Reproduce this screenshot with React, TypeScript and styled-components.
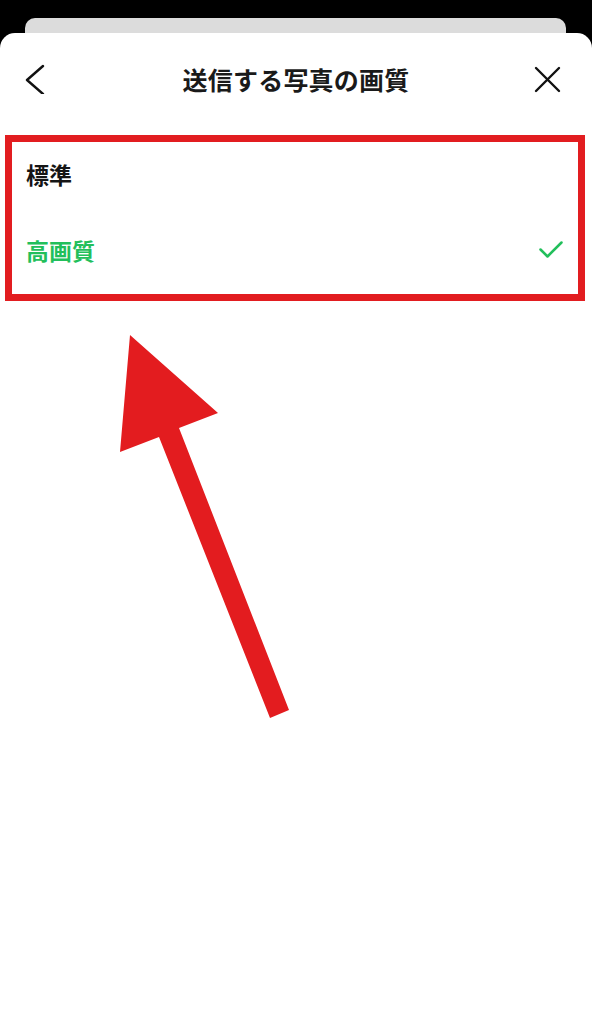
import React from "react";
import styled, { createGlobalStyle } from "styled-components";

const GlobalStyle = createGlobalStyle`
  html, body {
    margin: 0;
    padding: 0;
    background: #000;
  }
  body {
    font-family: "Noto Sans CJK JP", "Noto Sans", sans-serif;
  }
  #root {
    min-height: 100vh;
    display: flex;
    flex-direction: column;
  }
`;

const Screen = styled.div`
  flex: 1;
  display: flex;
  flex-direction: column;
  padding-top: 18px;
  background: #000;
  position: relative;
`;

const BehindCard = styled.div`
  height: 15px;
  margin: 0 26px 0 25px;
  background: #dcdcdc;
  border-radius: 10px 10px 0 0;
`;

const Sheet = styled.div`
  flex: 1;
  background: #fff;
  border-radius: 15px 15px 0 0;
  display: flex;
  flex-direction: column;
`;

const Header = styled.header`
  height: 92px;
  display: grid;
  grid-template-columns: 1fr auto 1fr;
  align-items: center;
  padding: 0 22px;
`;

const IconButton = styled.button<{ $end?: boolean }>`
  border: 0;
  background: none;
  padding: 0;
  width: 30px;
  height: 30px;
  display: flex;
  justify-self: ${(p) => (p.$end ? "end" : "start")};
  margin-right: ${(p) => (p.$end ? "8px" : "0")};
  color: #111;
`;

const Title = styled.h1`
  margin: 0;
  font-size: 25px;
  font-weight: 700;
  color: #1a1a1a;
  letter-spacing: 0.2px;
  white-space: nowrap;
`;

const OptionList = styled.ul`
  list-style: none;
  margin: 10px 7px 0 5px;
  padding: 0;
  border: 7px solid #e21d20;
`;

const OptionRow = styled.li<{ $selected?: boolean }>`
  height: 76px;
  box-sizing: border-box;
  padding: 0 15px 12px 14px;
  display: flex;
  align-items: center;
  justify-content: space-between;
  font-size: 23px;
  font-weight: 700;
  color: ${(p) => (p.$selected ? "#22bf5b" : "#151515")};
`;

const ArrowOverlay = styled.svg`
  position: absolute;
  left: 0;
  top: 0;
  width: 592px;
  height: 1024px;
  pointer-events: none;
`;

const ChevronLeft = () => (
  <svg width="30" height="30" viewBox="0 0 30 30" fill="none">
    <path d="M21 2 L5 16 L21 30" stroke="currentColor" strokeWidth="2.4" strokeLinecap="round" strokeLinejoin="round" />
  </svg>
);

const CloseIcon = () => (
  <svg width="30" height="30" viewBox="0 0 30 30" fill="none">
    <path d="M4 4 L27 27 M27 4 L4 27" stroke="currentColor" strokeWidth="2.4" strokeLinecap="round" />
  </svg>
);

const CheckIcon = () => (
  <svg width="24" height="18" viewBox="0 0 24 18" fill="none">
    <path d="M1.5 8.5 L8.5 15.5 L22.5 1.5" stroke="#22bf5b" strokeWidth="2.5" strokeLinecap="round" strokeLinejoin="round" />
  </svg>
);

const options = [
  { label: "標準", selected: false },
  { label: "高画質", selected: true },
];

export default function App() {
  return (
    <>
      <GlobalStyle />
      <Screen>
        <BehindCard />
        <Sheet>
          <Header>
            <IconButton aria-label="戻る">
              <ChevronLeft />
            </IconButton>
            <Title>送信する写真の画質</Title>
            <IconButton $end aria-label="閉じる">
              <CloseIcon />
            </IconButton>
          </Header>
          <OptionList>
            {options.map((o) => (
              <OptionRow key={o.label} $selected={o.selected}>
                <span>{o.label}</span>
                {o.selected && <CheckIcon />}
              </OptionRow>
            ))}
          </OptionList>
        </Sheet>
        <ArrowOverlay viewBox="0 0 592 1024">
          <polygon
            points="130,335 218,413 179,428 289,710 270,718 159,437 120,452"
            fill="#e31c1f"
          />
        </ArrowOverlay>
      </Screen>
    </>
  );
}
